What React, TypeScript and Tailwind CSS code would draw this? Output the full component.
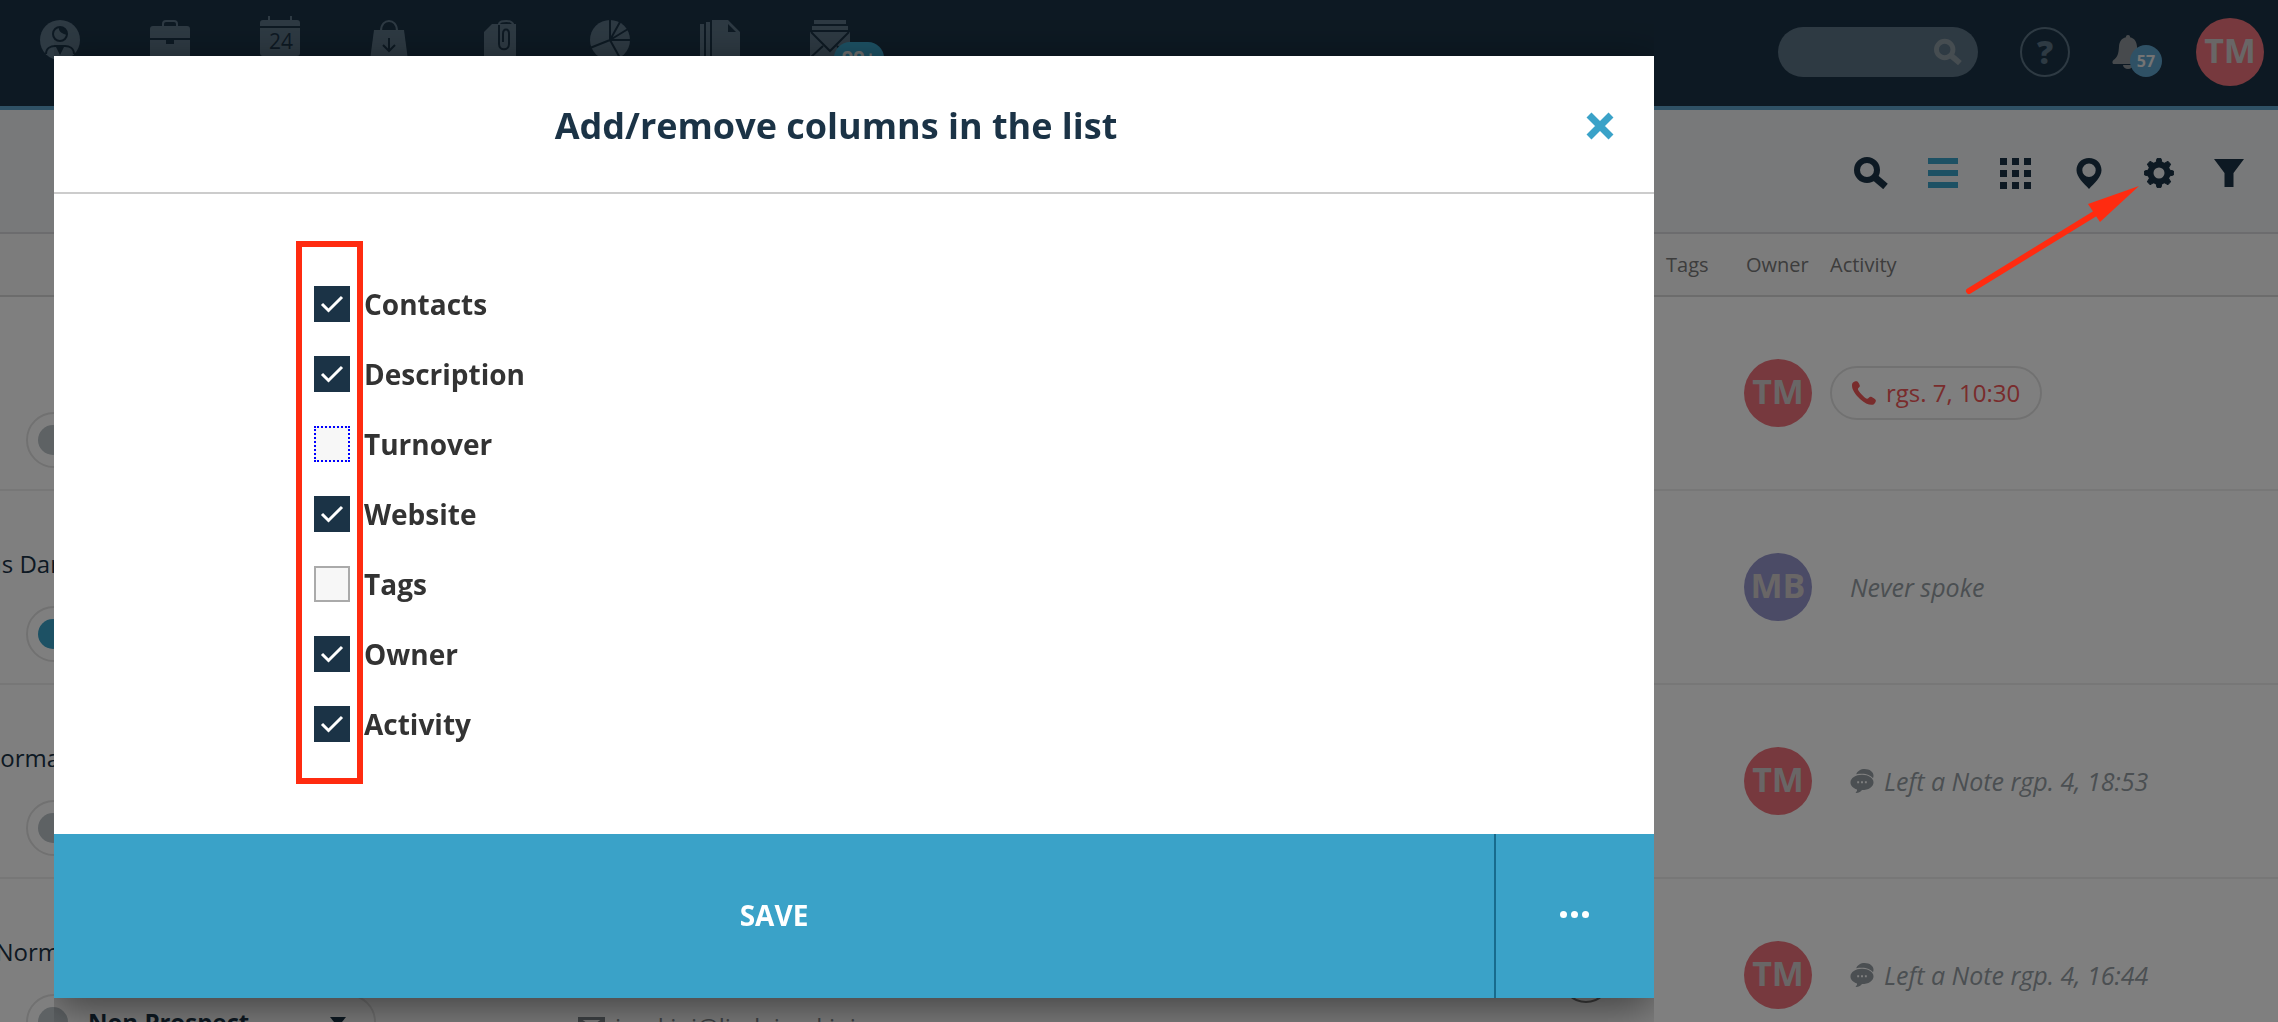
import React, { useState } from "react";

interface IconProps {
  className?: string;
}

const SearchIcon: React.FC<IconProps> = ({ className }) => (
  <svg viewBox="0 0 34 32" className={className} fill="none" stroke="currentColor">
    <circle cx="13" cy="13" r="10" strokeWidth="6" />
    <path d="M21 20.5 L31.5 29.5" strokeWidth="7" />
  </svg>
);

const ListIcon: React.FC<IconProps> = ({ className }) => (
  <svg viewBox="0 0 30 30" className={className} fill="currentColor">
    <path d="M0 0h30v6H0zM0 12h30v6H0zM0 24h30v6H0z" />
  </svg>
);

const GridIcon: React.FC<IconProps> = ({ className }) => (
  <svg viewBox="0 0 31 31" className={className} fill="currentColor">
    <path d="M0 0h7v7H0zM12 0h7v7h-7zM24 0h7v7h-7zM0 12h7v7H0zM12 12h7v7h-7zM24 12h7v7h-7zM0 24h7v7H0zM12 24h7v7h-7zM24 24h7v7h-7z" />
  </svg>
);

const PinIcon: React.FC<IconProps> = ({ className }) => (
  <svg viewBox="0 0 26 31" className={className} fill="currentColor">
    <path
      fillRule="evenodd"
      d="M13 0C5.600 0 .5 5.400.5 12.300c0 6.900 7.500 13.200 12.500 18.700 5-5.500 12.500-11.800 12.500-18.700C25.500 5.400 20.400 0 13 0zm0 5.500a6.700 6.700 0 1 1 0 13.400 6.700 6.700 0 0 1 0-13.400z"
    />
  </svg>
);

const GearIcon: React.FC<IconProps> = ({ className }) => (
  <svg viewBox="0 0 30 30" className={className} fill="none" stroke="currentColor">
    <circle cx="15" cy="15" r="8.500" strokeWidth="6" />
    <g fill="currentColor" stroke="currentColor" strokeWidth="1" strokeLinejoin="round">
      {[0, 45, 90, 135, 180, 225, 270, 315].map((angle) => (
        <path key={angle} d="M11.800 5.500 L13 .6 H17 L18.200 5.500z" transform={`rotate(${angle} 15 15)`} />
      ))}
    </g>
  </svg>
);

const FilterIcon: React.FC<IconProps> = ({ className }) => (
  <svg viewBox="0 0 30 30" className={className} fill="currentColor">
    <path d="M0 1h30L19.500 15v14h-9V15z" />
  </svg>
);

const BellIcon: React.FC<IconProps> = ({ className }) => (
  <svg viewBox="0 0 32 34" className={className} fill="currentColor">
    <path d="M16 0a2 2 0 0 1 2 2.300c4.500 1 6.700 4.500 7 9.200.4 7 1.500 11 5.500 13.500 1.500 1 1.500 4-.5 4H2c-2 0-2-3-.5-4 4-2.500 5.100-6.500 5.500-13.500.3-4.700 2.500-8.200 7-9.200A2 2 0 0 1 16 0z" />
    <path d="M11 30h10a5 4 0 0 1-10 0z" />
  </svg>
);

const PhoneIcon: React.FC<IconProps> = ({ className }) => (
  <svg viewBox="0 0 24 24" className={className} fill="currentColor">
    <path d="M1 1.500C2.500.2 4 0 5 .3c1 .4 2.800 3.600 2.900 4.700.1 1.200-2 2.100-2 3 0 2 6.500 9 9 9.800 1.200.4 2.400-2 3.600-2 1.300 0 4.700 2.200 5.200 3.200.6 1.200-.7 3.500-2.200 4.400-2.700 1.500-8.300-.8-13.500-5.500C3.500 13.700 0 9 0 4.500 0 3.300.3 2.200 1 1.500z" />
  </svg>
);

const ChatIcon: React.FC<IconProps> = ({ className }) => (
  <svg viewBox="0 0 24 25" className={className} fill="currentColor">
    <path d="M6 5.500C7.200 2 10.500 0 14.700 0 20 0 24 3 24 7c0 1-.2 1.800-.6 2.600C21.500 7 17 5 12 5c-2.300 0-4.300.1-6 .5z" />
    <path
      fillRule="evenodd"
      d="M12 6c6.600 0 12 3.500 12 8s-5.400 8-12 8c-.6 1-2.500 3-5.500 3-1.200 0-1.500-.6-.7-1 .9-.5 1.200-1.600 1-2.600C2.800 20 0 17.300 0 14c0-4.500 5.400-8 12-8zm-5 6.800v2h2v-2zm4 0v2h2v-2zm4 0v2h2v-2z"
    />
  </svg>
);

const NAV_ICONS = [
  {
    label: "Contacts",
    icon: (
      <>
        <circle cx="20" cy="20" r="20" fill="currentColor" />
        <g fill="none" stroke="#1b3346" strokeWidth="2">
          <circle cx="20" cy="14" r="7" />
          <path d="M6 34c0-6 5-8 9-8h10c4 0 9 2 9 8" />
        </g>
        <path d="M19 7c-1 5 4 7 8 8 1-5-3-8-8-8zM15.500 26h9L20 35z" fill="#1b3346" />
      </>
    ),
  },
  {
    label: "Companies",
    icon: (
      <>
        <path d="M13 7V4c0-2 1-3 3-3h8c2 0 3 1 3 3v3" fill="none" stroke="currentColor" strokeWidth="2" />
        <path d="M3 6h34a3 3 0 0 1 3 3v9H0V9a3 3 0 0 1 3-3zM0 20h16v4h8v-4h16v18H0z" fill="currentColor" />
      </>
    ),
  },
  {
    label: "Calendar",
    icon: (
      <>
        <path d="M8-4h2v4h20v-4h2v4h5a3 3 0 0 1 3 3v3H0V3a3 3 0 0 1 3-3h5zM0 8h40v25a3 3 0 0 1-3 3H3a3 3 0 0 1-3-3z" fill="currentColor" />
        <text x="21" y="29" textAnchor="middle" fontSize="21" fill="#1b3346">
          24
        </text>
      </>
    ),
  },
  {
    label: "Sales",
    icon: (
      <>
        <path d="M11 11c0-7 4-10 8-10s8 3 8 10" fill="none" stroke="currentColor" strokeWidth="2" />
        <path d="M4 10h30l4 30H0z" fill="currentColor" />
        <path d="M19 18v13M13 25l6 6 6-6" fill="none" stroke="#1b3346" strokeWidth="2" />
      </>
    ),
  },
  {
    label: "Files",
    icon: (
      <>
        <path d="M4 12l8-8h24v36H4z" fill="currentColor" />
        <path d="M18.500 5c1-4 4-4 8-4s6 1 7 4" fill="none" stroke="currentColor" strokeWidth="2" />
        <path
          d="M19 5v19c0 7 10 7 10 0V14c0-6-6-6-6 0v8"
          fill="none"
          stroke="#1b3346"
          strokeWidth="2"
        />
      </>
    ),
  },
  {
    label: "Reports",
    icon: (
      <>
        <circle cx="20" cy="20" r="20" fill="currentColor" />
        <path d="M20 0v20L0 28M20 20l10-18M20 20l18-11M20 20h20M20 20l10 18" fill="none" stroke="#1b3346" strokeWidth="2" />
      </>
    ),
  },
  {
    label: "Documents",
    icon: (
      <path
        fillRule="evenodd"
        d="M0 4h4v36H0zM6 2h4v38H6zM12 0h16l12 12v28H12zM28 4v8h8z"
        fill="currentColor"
      />
    ),
  },
  {
    label: "Mail",
    icon: (
      <>
        <path d="M4 0h32v4H4zM2 6h36v4H2zM0 12h40v28H0z" fill="currentColor" />
        <path d="M1 12l19 19 19-19M0 38l13-12M40 38L27 26" fill="none" stroke="#1b3346" strokeWidth="2" />
      </>
    ),
  },
];

interface AvatarProps {
  initials: string;
}

const Avatar: React.FC<AvatarProps> = ({ initials }) => (
  <span
    className={`flex size-[68px] items-center justify-center rounded-full pb-1 text-[34px] leading-none font-bold text-[#d2cccc] ${
      initials === "MB" ? "bg-[#9696cd]" : "bg-[#ee737c]"
    }`}
  >
    {initials}
  </span>
);

const ROWS = [
  { name: "", dot: "gray", owner: "TM", kind: "call", activity: "rgs. 7, 10:30" },
  { name: "us Dar", dot: "blue", owner: "MB", kind: "none", activity: "Never spoke" },
  { name: "orma", dot: "gray", owner: "TM", kind: "note", activity: "Left a Note rgp. 4, 18:53" },
  {
    name: "Norm",
    dot: "gray",
    owner: "TM",
    kind: "note",
    activity: "Left a Note rgp. 4, 16:44",
    status: "Non Prospect",
    email: "jarekini@lindejarekini",
  },
];

const COLUMNS = [
  { label: "Contacts", checked: true },
  { label: "Description", checked: true },
  { label: "Turnover", checked: false, dotted: true },
  { label: "Website", checked: true },
  { label: "Tags", checked: false },
  { label: "Owner", checked: true },
  { label: "Activity", checked: true },
];

const TopBar = () => (
  <header className="flex h-[110px] items-start justify-between border-b-4 border-[#5ea2cb] bg-[#1b3346]">
    <nav className="flex gap-[70px] pt-5 pl-10 text-[#5c7486]">
      {NAV_ICONS.map((item) => (
        <a key={item.label} href="#" aria-label={item.label} className="relative">
          <svg viewBox="0 0 40 40" className="size-10 overflow-visible">
            {item.icon}
          </svg>
          {item.label === "Mail" && (
            <span className="absolute top-[22px] left-6 h-8 w-[50px] rounded-full bg-[#3aa2c8] text-center text-xl leading-8 font-bold text-[#dcdcdc]">
              99+
            </span>
          )}
        </a>
      ))}
    </nav>
    <div className="flex items-center pt-[18px] pr-[14px]">
      <label className="flex h-[50px] w-[200px] items-center rounded-full bg-[#5c7486] pr-4 pl-5">
        <input type="text" aria-label="Search" className="w-0 flex-1 outline-none" />
        <SearchIcon className="h-7 w-7 text-[#8c9aa3]" />
      </label>
      <button
        aria-label="Help"
        className="ml-[42px] size-[50px] rounded-full border-2 border-[#5c7486] text-[32px] leading-none font-extrabold text-[#5c7486]"
      >
        ?
      </button>
      <button aria-label="Notifications" className="relative ml-[42px] h-[34px] w-[50px]">
        <BellIcon className="h-[34px] w-8 text-[#8e959b]" />
        <span className="absolute top-[10px] right-0 flex size-8 items-center justify-center rounded-full bg-[#5ea2cb] text-base font-bold text-[#e8e8e8]">
          57
        </span>
      </button>
      <div className="ml-[34px]">
        <Avatar initials="TM" />
      </div>
    </div>
  </header>
);

const Toolbar = () => (
  <div className="flex h-[124px] items-center justify-end border-b-2 border-[#d9d9dc] bg-[#f0f2f4] pt-1 pr-[34px] text-[#1b3346]">
    <button aria-label="Search">
      <SearchIcon className="h-8 w-[34px]" />
    </button>
    <button aria-label="List view" className="ml-10 text-[#3aa2c8]">
      <ListIcon className="size-[30px]" />
    </button>
    <button aria-label="Grid view" className="ml-[42px]">
      <GridIcon className="size-[31px]" />
    </button>
    <button aria-label="Map view" className="ml-[45px]">
      <PinIcon className="h-[31px] w-[26px]" />
    </button>
    <button aria-label="Settings" className="ml-[42px]">
      <GearIcon className="size-[30px]" />
    </button>
    <button aria-label="Filter" className="ml-10">
      <FilterIcon className="size-[30px]" />
    </button>
  </div>
);

const CompanyTable = () => (
  <table className="w-full table-fixed border-collapse text-2xl leading-8">
    <colgroup>
      <col className="w-[578px]" />
      <col />
      <col className="w-[105px]" />
      <col className="w-[78px]" />
      <col className="w-[86px]" />
      <col className="w-[448px]" />
    </colgroup>
    <thead>
      <tr className="h-[62px] border-b-2 border-[#d9d9d9] bg-[#f9f9f9] text-left text-xl text-[#7a7a7a]">
        <th />
        <th />
        <th />
        <th className="font-normal">Tags</th>
        <th className="pl-0.5 font-normal">Owner</th>
        <th className="font-normal">Activity</th>
      </tr>
    </thead>
    <tbody>
      {ROWS.map((row, i) => (
        <tr key={i} className="h-[194px] border-b-2 border-[#efefef]">
          <td className="pb-[21px] pl-[26px] align-bottom">
            <div className="-ml-[26px] flex w-[60px] justify-end pb-[26px] whitespace-nowrap text-[#1b3346]">
              {row.name}
            </div>
            <button className="flex h-14 w-[350px] items-center rounded-full border-2 border-[#e3e3e3] pr-7 pl-[10px] font-bold text-[#1b3346]">
              <span
                className={`size-[30px] shrink-0 rounded-full ${row.dot === "blue" ? "bg-[#3aa2c8]" : "bg-[#bcc4c9]"}`}
              />
              <span className="ml-5 flex-1 text-left">{row.status}</span>
              <svg viewBox="0 0 16 10" className="h-[10px] w-4" fill="currentColor">
                <path d="M0 0h16L8 10z" />
              </svg>
            </button>
          </td>
          <td className="pb-7 align-bottom text-[#7f878c]">
            {row.email && (
              <a href="#" className="flex items-center gap-[10px]">
                <svg viewBox="0 0 27 20" className="h-5 w-[27px]" fill="none" stroke="currentColor" strokeWidth="3">
                  <path d="M1.500 1.500h24v17h-24zM2 3l11.500 8L25 3" />
                </svg>
                {row.email}
              </a>
            )}
          </td>
          <td className="pt-[74px] align-top">
            {row.email && <span className="block size-[50px] rounded-full border-2 border-[#7a7a7a]" />}
          </td>
          <td />
          <td>
            <Avatar initials={row.owner} />
          </td>
          <td>
            {row.kind === "call" ? (
              <button className="flex h-[54px] items-center gap-[10px] rounded-full border-2 border-[#e3e3e3] px-5 text-[#f25858]">
                <PhoneIcon className="size-6" />
                {row.activity}
              </button>
            ) : (
              <span className="flex items-center gap-[10px] pl-5 text-[25px] text-[#969ea4] italic">
                {row.kind === "note" && <ChatIcon className="size-6" />}
                {row.activity}
              </span>
            )}
          </td>
        </tr>
      ))}
    </tbody>
  </table>
);

const ColumnsDialog = () => {
  const [columns, setColumns] = useState(COLUMNS);

  const toggle = (label: string) =>
    setColumns(columns.map((c) => (c.label === label ? { ...c, checked: !c.checked } : c)));

  return (
    <div role="dialog" aria-label="Add/remove columns in the list" className="bg-white shadow-[0_10px_40px_rgba(0,0,0,0.5)]">
      <div className="flex h-[138px] items-center border-b-2 border-[#cccccc] pt-1 pr-10 pl-8">
        <h1 className="flex-1 text-center text-4xl font-bold text-[#1b3346]">Add/remove columns in the list</h1>
        <button aria-label="Close" className="text-[#3aa2c8]">
          <svg viewBox="0 0 28 28" className="size-7" stroke="currentColor" strokeWidth="7">
            <path d="M3 3l22 22M25 3L3 25" />
          </svg>
        </button>
      </div>

      <div className="relative flex flex-col gap-[34px] pt-[92px] pb-[92px] pl-[260px]">
        {columns.map((c) => (
          <label key={c.label} className="flex h-9 items-center gap-[14px] text-[28px] font-bold text-[#333333]">
            <span className="grid size-9">
              <input
                type="checkbox"
                checked={c.checked}
                onChange={() => toggle(c.label)}
                className={`col-start-1 row-start-1 size-9 appearance-none border-2 bg-[#f7f7f7] checked:border-solid checked:border-[#1b3346] checked:bg-[#1b3346] ${
                  c.dotted ? "border-dotted border-[#0000ff]" : "border-[#aaaaaa]"
                }`}
              />
              {c.checked && (
                <svg viewBox="0 0 36 36" className="pointer-events-none col-start-1 row-start-1" fill="none" stroke="#fff" strokeWidth="3">
                  <path d="M8 18l6.500 6.500L28 11" />
                </svg>
              )}
            </span>
            {c.label}
          </label>
        ))}
        <div className="pointer-events-none absolute top-[47px] bottom-[50px] left-[242px] w-[67px] border-6 border-[#ff2b10]" />
      </div>

      <div className="flex h-[164px] bg-[#3aa2c8] text-[28px] font-bold text-white">
        <button className="flex-1 pb-0.5">SAVE</button>
        <button aria-label="More" className="flex w-40 items-center justify-center gap-1 border-l-2 border-[#176b8d] pr-0.5 pb-1">
          <span className="size-[7px] rounded-full bg-white" />
          <span className="size-[7px] rounded-full bg-white" />
          <span className="size-[7px] rounded-full bg-white" />
        </button>
      </div>
    </div>
  );
};

export default function App() {
  return (
    <div className="relative h-screen overflow-hidden bg-white font-['Open_Sans',sans-serif]">
      <TopBar />
      <Toolbar />
      <CompanyTable />

      <div className="fixed inset-0 overflow-hidden bg-black/50 pl-[54px]">
        <div className="h-full max-w-[1600px] overflow-hidden pt-14">
          <ColumnsDialog />
        </div>
      </div>

      {/* pointer to the settings gear */}
      <svg viewBox="0 0 176 112" className="pointer-events-none absolute top-[184px] right-[138px] h-28 w-44" fill="#ff2b10">
        <path d="M5 107L132 29" stroke="#ff2b10" strokeWidth="6" strokeLinecap="round" />
        <path d="M175 2L124 20l12 18z" />
      </svg>
    </div>
  );
}
